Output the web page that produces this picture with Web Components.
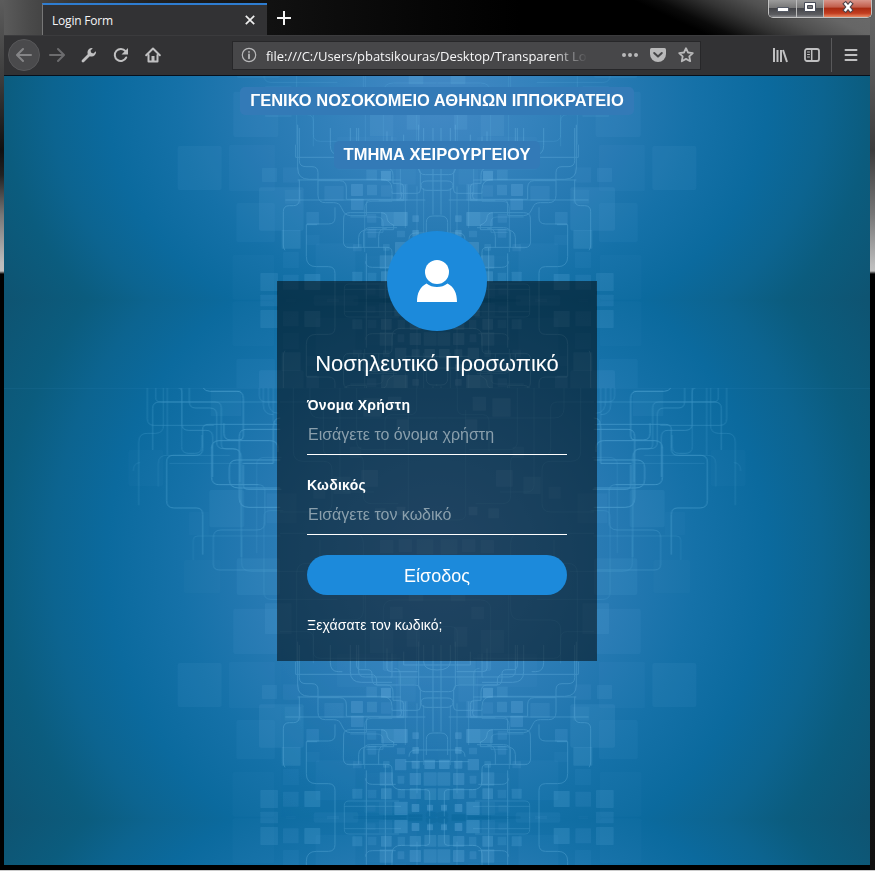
<!DOCTYPE html>
<html lang="el">
<head>
<meta charset="utf-8">
<title>Login Form</title>
<style>
html,body{margin:0;height:100%;overflow:hidden;background:#000}
</style>
</head>
<body>
<browser-window>
  <browser-tab slot="tab">Login Form</browser-tab>
  <browser-toolbar slot="toolbar">file:///C:/Users/pbatsikouras/Desktop/Transparent Lo</browser-toolbar>
  <login-page>
    <page-label slot="heading">ΓΕΝΙΚΟ ΝΟΣΟΚΟΜΕΙΟ ΑΘΗΝΩΝ ΙΠΠΟΚΡΑΤΕΙΟ</page-label>
    <page-label slot="heading">ΤΜΗΜΑ ΧΕΙΡΟΥΡΓΕΙΟΥ</page-label>
    <login-card>
      <span slot="title">Νοσηλευτικό Προσωπικό</span>
      <form-field label="Όνομα Χρήστη">Εισάγετε το όνομα χρήστη</form-field>
      <form-field label="Κωδικός">Εισάγετε τον κωδικό</form-field>
      <span slot="action">Είσοδος</span>
      <span slot="link">Ξεχάσατε τον κωδικό;</span>
    </login-card>
  </login-page>
</browser-window>
<script>
function define(name, html) {
  customElements.define(name, class extends HTMLElement {
    constructor() {
      super();
      this.attachShadow({mode: 'open'}).innerHTML = html;
    }
    connectedCallback() {
      const l = this.shadowRoot.querySelector('[data-label]');
      if (l) l.textContent = this.getAttribute('label');
    }
  });
}

define('browser-window', `
<style>
:host{display:grid;box-sizing:border-box;width:875px;height:871px;grid-template:35px 41px 1fr / 1fr;padding:0 5px 6px 4px;
 background:
  linear-gradient(#ccc,#ccc) 0 870px/100% 1px no-repeat,
  linear-gradient(#5c5c5c,#3c3c3c 80px,#101010 150px,#222 175px,#777 215px,#bbb 262px,#c0c0c0 271px,#444 273px,#000 274px) 0 0/4px 870px no-repeat,
  linear-gradient(#666,#555 80px,#3c3c3c 150px,#777 215px,#bbb 265px,#c0c0c0 271px,#000 274px,#000 480px,#151515 600px,#111) 870px 0/5px 870px no-repeat,
  linear-gradient(25deg,transparent 300px,#0a0a0a 310px,#333 330px,#505050 348px,#666 368px,#6b6b6b) 0 0/875px 36px no-repeat,
  linear-gradient(90deg,#5d5d5d,#4a4a4a 30px,#383838 70px,#222 150px,#111 270px,#060606 420px,#000 520px) 0 0/100% 76px no-repeat,#000;
 position:relative}
.strip{display:flex;padding:3px 0 0 38px;min-width:0}
.plus{width:14px;height:14px;margin:8px 0 0 10px}
.bar{display:flex;flex-direction:column;border-bottom:1px solid #06101c}
main{min-height:0;display:flex}
::slotted(*){flex:1}
.strip ::slotted(*){flex:none}
window-buttons{position:absolute;right:3px;top:0}
</style>
<div class="strip"><slot name="tab"></slot>
<svg class="plus" viewBox="0 0 14 14"><path d="M7 0v14M0 7h14" stroke="#f4f4f4" stroke-width="2"/></svg></div>
<div class="bar"><slot name="toolbar"></slot></div>
<main><slot></slot></main>
<window-buttons></window-buttons>`);

define('window-buttons', `
<style>
:host{display:flex;box-sizing:border-box;width:104px;height:18px;border:1px solid #c2c2c2;border-top:0;border-radius:0 0 5px 5px;overflow:hidden;box-shadow:0 0 1px #111,inset 0 0 0 1px #333}
div{display:flex;align-items:center;justify-content:center;box-sizing:border-box;border-right:1px solid #bbb;background:linear-gradient(#9b9b9b,#777 45%,#444549 50%,#5b5c60 85%,#85868a)}
.a{width:28px}.b{width:27px}.c{flex:1;border:0;background:linear-gradient(#d9958a,#c25d4b 42%,#a92a12 48%,#c23d20 78%,#e98a64)}
svg{width:14px;height:13px;display:block;margin-bottom:4px}
</style>
<div class="a"><svg viewBox="0 0 14 13"><rect x="1.500" y="7.500" width="11" height="4" fill="#fff" stroke="#555a66"/></svg></div>
<div class="b"><svg viewBox="0 0 14 13"><path fill="#fff" fill-rule="evenodd" stroke="#484c58" d="M1.500 2.500h11v9h-11zM4.500 5.500h5v3h-5z"/></svg></div>
<div class="c"><svg viewBox="0 0 14 13"><path d="M4.500 4l5 6M9.500 4l-5 6" stroke="#50434a" stroke-width="4.600" stroke-linecap="square"/><path d="M4.500 4l5 6M9.500 4l-5 6" stroke="#fff" stroke-width="2.400" stroke-linecap="square"/></svg></div>`);

define('browser-tab', `
<style>
:host{display:flex;box-sizing:border-box;width:225px;height:32px;border-top:2px solid #2e7dd1;border-left:1px solid #777;background:#323234;align-items:center;padding:0 12px 0 9px;
 font:12px "Open Sans","Noto Sans",sans-serif;color:#f5f5f7;letter-spacing:-.2px}
span{flex:1}
svg{width:10px;height:10px}
</style><span><slot></slot></span>
<svg viewBox="0 0 10 10"><path d="M.8.8l8.400 8.400M9.200.8L.8 9.200" stroke="#eee" stroke-width="1.700"/></svg>`);

define('browser-toolbar', `
<style>
:host{display:flex;align-items:center;box-sizing:border-box;height:40px;background:#323234;border-top:1px solid #3b3b3d;padding:0 11px 1px 4px;color:#c0c0c1}
svg{width:16px;height:16px;flex:none;fill:none;stroke:currentColor;stroke-width:2;stroke-linecap:round;stroke-linejoin:round}
.back{width:30px;height:30px;border-radius:50%;background:#4a4a4c;border:1px solid #58585a;display:flex;align-items:center;justify-content:center;color:#858587}
.f{color:#6c6c6e;margin-left:9px}
.g{margin-left:16px}
.url{display:flex;align-items:center;box-sizing:border-box;width:469px;height:29px;margin-left:71px;padding:0 6px 0 8px;background:#474749;border:1px solid #272729;font:13px "Open Sans","Noto Sans",sans-serif;color:#f6f6f7}
.t{flex:none;width:322px;margin:2px 0 0 9px;overflow:hidden;white-space:nowrap;-webkit-mask:linear-gradient(90deg,#000 285px,transparent 322px);letter-spacing:-.03px}
.url svg{color:#b9b9ba}
.line{width:1px;height:34px;background:#59595b;margin:0 11px 0 11px}
</style>
<div class="back"><svg viewBox="0 0 16 16"><path d="M15 8H1.500M7 2L1 8l6 6"/></svg></div>
<svg class="f" viewBox="0 0 16 16"><path d="M1 8h13.500M9 2l6 6-6 6"/></svg>
<svg class="g" viewBox="0 0 16 16"><path d="M2 14l6-6" stroke-width="2.800"/><path fill="currentColor" stroke="none" d="M11.800 1.100A4.400 4.400 0 0 0 6.600 6.400L7 8l1 1 1.600.400a4.400 4.400 0 0 0 5.300-5.200L12.300 6.500l-2-.800-.8-2z"/></svg>
<svg class="g" viewBox="0 0 16 16"><path d="M13.200 10.500A6 6 0 1 1 12.500 4.200"/><path fill="currentColor" stroke="none" d="M15 1v6.500H8.500z"/></svg>
<svg class="g" viewBox="0 0 16 16"><path d="M1.200 8.200L8 1.500l6.800 6.700"/><path d="M3.500 8v6.500h9V8" /><path fill="currentColor" stroke="none" d="M6.500 9h3v6h-3z"/></svg>
<div class="url">
<svg viewBox="0 0 16 16" stroke-width="1"><circle cx="8" cy="8" r="6.700" stroke-width="1.200"/><path d="M8 7.500v3.800M8 4.800v.1" stroke-width="1.800"/></svg>
<span class="t"><slot></slot></span>
<svg style="margin-left:34px" viewBox="0 0 16 16"><path d="M2 8h.01M8 8h.01M14 8h.01" stroke-width="4"/></svg>
<svg style="margin-left:12px" viewBox="0 0 16 16"><path fill="currentColor" stroke="none" d="M1.500 1h13Q16 1 16 2.500V7A8 8 0 0 1 0 7V2.500Q0 1 1.500 1z"/><path d="M4.200 6L8 9.600 11.800 6" stroke="#474749"/></svg>
<svg style="margin-left:12px" viewBox="0 0 16 16"><path stroke-width="1.800" d="M8 1.200l2 4.300 4.800.6-3.500 3.300.9 4.800L8 11.900l-4.200 2.300.9-4.800L1.200 6.100 6 5.500z"/></svg>
</div>
<svg style="margin-left:71px" viewBox="0 0 16 16"><path stroke-linecap="butt" d="M2 1v14M5.500 3v12M9 3v12M11 3l4 12"/></svg>
<svg class="g" viewBox="0 0 16 16"><rect x="1" y="2" width="14" height="12" rx="2" stroke-width="1.800"/><path d="M7.700 2v12" stroke-width="1.500"/><path stroke-width="1" d="M3.500 5h2M3.500 7.500h2M3.500 10h2"/></svg>
<div class="line"></div>
<svg viewBox="0 0 16 16"><path d="M2.500 3h11M2.500 8h11M2.500 13h11"/></svg>`);

// Square tiles: [x, y, w, h, opacity]; the right half and the lower strip are reflections.
const squares = [
 [75,90,45,42,.1],[138,88,50,46,.08],[66,148,134,130,.1],[143,155,50,42,.07],[-2,195,116,118,.06],[134,276,57,56,.16],[-178,24,132,132,.08],[-24,20,138,140,.05],
 [-14,350,126,135,.035],[70,405,53,54,.14],[138,410,47,45,.1],[202,408,48,48,.19],[70,470,53,36,.12],[146,482,30,14,.04],[230,472,134,34,.08],[270,482,36,14,.08],
 [138,342,48,48,.06],[208,222,38,38,.15],[262,144,58,44,.12],[208,290,40,32,.05],[236,316,120,120,.055],
 [342,138,36,36,.25],[342,182,38,34,.22],[388,95,32,32,.17],[432,98,30,30,.34],[390,140,30,32,.2],[432,142,30,34,.12],[478,138,34,50,.15],
 [390,228,28,26,.14],[432,222,80,42,.24],[470,222,42,42,.13],[526,232,20,20,.25],[392,272,26,27,.15],[480,278,24,20,.17],[526,276,20,20,.3],
 [348,318,26,22,.12],[438,318,20,20,.16],[474,312,34,34,.25],[524,317,24,24,.27],[562,314,32,28,.3],[428,352,40,40,.2],[482,362,20,24,.18],[518,354,34,36,.25],[560,352,39,40,.2],
 [346,401,30,30,.19],[392,404,26,26,.14],[432,400,32,33,.25],[482,402,22,28,.17],[518,400,34,32,.24],[562,400,36,35,.2],
 [472,440,40,40,.27],[524,447,23,24,.32],[570,449,18,18,.29],[426,440,40,40,.08],[390,450,26,20,.08],
 [440,20,24,28,.1],[484,16,56,72,.11],[476,70,60,70,.06],[300,-4,180,100,.05],[380,355,160,120,.035]
];
const topSquares = [
 [385,240,105,108,.04],[628,360,105,112,.09],[552,570,110,100,.03],[710,565,130,110,.09],[700,716,135,136,.08],[795,700,80,92,.1],[632,60,92,78,.07],[567,425,60,70,.04],[800,370,90,90,.08],
 [940,350,36,36,.12],[1000,320,52,52,.16],[1084,300,50,50,.18],[1090,85,55,55,.2],[1164,80,40,42,.2],[1190,148,36,40,.2],[1050,230,34,34,.1],[1125,415,32,30,.2],[1190,410,26,26,.25],[1140,510,40,40,.17],[1196,508,40,38,.18],[1250,508,50,45,.16],[1146,575,44,42,.16],[1200,570,34,38,.2],[1160,640,30,30,.16],[1226,650,44,44,.16],[1170,710,38,38,.15],[1110,780,70,70,.12],[1220,770,40,60,.14]
];
const r = a => a.map(([x,y,w,h,o]) => `<rect x="${x}" y="${y}" width="${w}" height="${h}" rx="${w > 100 ? 6 : 2}" opacity="${o}"/>`).join('');

// Glow ellipses: [id, centre y, vertical scale, band top, band height].
const bands = [['g1',100,.77,76,225],['g2',559.500,1,301,517],['g3',1019,.77,818,47]];
const stops = '<stop offset="0" stop-color="#4489c5"/><stop offset=".18" stop-color="#3482bc"/><stop offset=".33" stop-color="#2679b2"/><stop offset=".47" stop-color="#1571a8"/><stop offset=".6" stop-color="#0b6a9e"/><stop offset=".7" stop-color="#0c6490"/><stop offset=".79" stop-color="#0b5c7e"/><stop offset=".91" stop-color="#0e5472"/><stop offset="1" stop-color="#0e5070"/>';

define('circuit-backdrop', `
<style>:host{display:block}svg{display:block;width:100%;height:100%}</style>
<svg viewBox="4 76 866 789" preserveAspectRatio="none">
<defs>
 ${bands.map(([id, cy, s]) => `<radialGradient id="${id}" cx="0" cy="0" r="550" gradientUnits="userSpaceOnUse" gradientTransform="translate(437 ${cy}) scale(1 ${s})">${stops}</radialGradient>`).join('')}
 <clipPath id="low"><rect x="0" y="388" width="437.200" height="429.500"/></clipPath>
 <clipPath id="tileclip"><rect x="0" y="388" width="875" height="517"/></clipPath>
 <g id="half"><g clip-path="url(#low)">
  <g transform="translate(237 655) scale(.33333)">
   <g fill="#72b8e8">${r(squares)}</g>
   <g fill="none" stroke="#82caf1" stroke-width="3" opacity=".27">
    <path d="M182-40V90q0 34 35 34h216q32 0 32 30v12h75q10 0 10-10V106q0-16-17-16H420q-15 0-15-20V56q0-12-14-12h-20q-12 0-12-14V-30"/>
    <path d="M187-30V68q0 18 20 18h18q18 0 18 18v68q0 22 22 22h25q18 0 23 15l8 15q8 9 20 9h47v-35q0-13 15-13h80q10 0 10-10v-12"/>
    <path d="M176 20v38h225q18 0 18 20v12h31q18 0 18 22v24h20q12 0 12 12v40h-75"/>
    <path d="M280-30V22q0 28 24 28h12M243 128h65q20 0 20 22v34h170M187 125v60q0 18-18 18h-12q-18 0-18 18v100q0 10 5 16"/>
    <path d="M320 240q0-16 20-16h90q20 0 20 15t20 22v14h-75q-30 0-30 24v30h-28q-18 0-18-20zM380 330v-45q0-16 20-16h80M425 330v-35q0-25 25-25"/>
    <path d="M182 126h310M145 186h420M240 260H208v96q0 30 30 30h36q20 0 20 20v184M294 208v32q0 18-20 18h-64"/>
    <path d="M330 328h120q15 0 15 15v35q0 26 28 26h75q10 0 10 10v70M388 346v250M386 370q0 18 20 18h70M445 330v240M516 305q0-20 20-20h68M505 320h100"/>
    <path d="M600 538H336q-14 0-14-14V452q0-14 14-14h150M322 454h170M322 522h170" opacity=".7"/>
    <path d="M552 142q0-13 18-13h34M552 142q0 15 18 15h34M568 300v-46q0-20 20-20h16M588-30v260M545-40v130q0 20 20 20h40M560-30V20q0 25 40 25"/>
    <path d="M365-30V50q0 16 20 16h80V-5M340-30v80q0 32 33 32h92M450-20v60q0 10 12 10h80M500-10v40h105M460 66h145"/>
    <path d="M340 237h80q18 0 18 16v30h-50M465 160v30h-60q-22 0-22 22v130M490 170V60q0-20-18-20M505 140v130M540 145v270M560 150v180" opacity=".7"/>
   </g>
   <g fill="#025f93" opacity=".3"><rect x="438" y="482" width="70" height="6"/><rect x="514" y="478" width="42" height="10"/><rect x="566" y="471" width="34" height="17" rx="8" opacity=".6"/><rect x="350" y="483" width="140" height="5" opacity=".6"/></g>
  </g>
  <g transform="translate(0 370) scale(.33333)">
   <g fill="#72b8e8">${r(topSquares)}</g>
   <g fill="none" stroke="#6fc0ea" stroke-width="3" opacity=".42">
    <path d="M467 54v28q0 14 15 14h345M442 54v92q0 20 20 20h180" opacity=".6"/>
    <path d="M490 54v112q0 24-24 24h-24q-26 0-26 26v190" opacity=".5"/>
    <path d="M536 54q10 0 10 15v94q0 18 20 18h52q20 0 20 20v120" opacity=".7"/>
    <path d="M610 54q5 10 20 10h82q18 0 18 22v112q0 12-12 12h-26q-20 0-20-20V160"/>
    <path d="M458 240V116q0-20 20-20h168q18 0 18 18v108q0 15 15 15h20q25 0 25 25v300M568 54v40q0 20 18 20h44q20 0 20 20v82q0 20 20 20h30q20 0 20 20v80" opacity=".7"/>
    <path d="M830 163H625q-17 0-17 16v57q0 20-20 20h-68q-20 0-20 20v116q0 22 22 22h68q18 0 18 20v120" opacity=".85"/>
    <path d="M635 235q0-23 23-23h152q24 0 24 24v10M635 230v92q0 22 22 22h118"/>
    <path d="M775 344q20 0 20 20v90q0 26-24 26H662q-22 0-22 24v78q0 18 18 18h176" opacity=".6"/>
    <path d="M840 178H738q-20 0-20 22v184q0 28 28 28h94M840 270H710q-22 0-22 24v34q0 26 28 26h124M728 280h92v-106q0-30 20-30M730 284v60q0 14 14 14h100"/>
    <path d="M778 54v22q0 20 20 20h36M790 54v50q0 30 30 30M805 54v36q0 40 30 40M820 54v98q0 12 18 12M502 54v200M545 54v176q0 20 20 20h20q20 0 20-20v-35" opacity=".55"/>
    <path d="M420 278q-20 0-20 25M475 350V280q0-24 25-24h190M508 280h210M580 570v-60q0-12 12-12h250M770 550V285q0-23 25-23h50M792 600V440q0-18 18-18h40M792 600v66q0 22 20 22h200M725 500v78q0 26 28 26h160" opacity=".4"/>
   </g>
   <g fill="none" stroke="#67b9e5" stroke-width="3" opacity=".2">
    <path d="M840 96h110q20 0 20 20v120q0 20 20 20h80q20 0 20 20v100q0 25 25 25h80M880 54v190q0 30 30 30h60q26 0 26 26v100q0 26-26 26H840M1070 54v160q0 25 25 25h120M930 54v60q0 30 30 30h350M1250 54v60q0 20-20 20h-55q-20 0-20 20v90M1020 54v290q0 22 22 22h80M840 490h220q30 0 30 30v200q0 30-30 30h-90q-30 0-30 30v100M960 510v130q0 20 20 20h330M1225 120v310q0 20 20 20h70M890 875V610q0-30 30-30h150q26 0 26 26v290M1150 900V720q0-30 30-30h130M840 785h80q20 0 20 20v40q0 20 22 20h240M1250 900V790q0-20 20-20h40"/>
   </g>
  </g>
 </g></g>
 <g id="sym"><use href="#half"/><use href="#half" transform="translate(874 0) scale(-1 1)"/></g>
 <g id="tile" clip-path="url(#tileclip)"><use href="#sym"/><use href="#sym" transform="translate(0 1635) scale(1 -1)"/></g>
</defs>
${bands.map(([id,,, y, h]) => `<rect x="0" y="${y}" width="875" height="${h}" fill="url(#${id})"/>`).join('')}
<use href="#tile"/><use href="#tile" transform="translate(0 -517)"/>
<path d="M4 388.500h866" stroke="#4b9bcb" opacity=".09"/>
</svg>`);

define('login-page', `
<style>
:host{display:grid;font-family:"Liberation Sans",Arial,sans-serif;color:#fff;min-height:0;overflow:hidden}
circuit-backdrop,.c{grid-area:1/1;min-height:0}
.c{display:flex;flex-direction:column;align-items:center;z-index:1;padding-top:11px;gap:26px}
::slotted(login-card){margin-top:86px}
</style>
<circuit-backdrop></circuit-backdrop>
<div class="c"><slot name="heading"></slot><slot></slot></div>`);

define('page-label', `
<style>:host{display:flex;align-items:center;justify-content:center;box-sizing:border-box;height:28px;padding:0 10px 2px;border-radius:5px;background:#337ab7;font-size:16.500px;font-weight:700;line-height:26px;white-space:nowrap}</style><slot></slot>`);

define('login-card', `
<style>
:host{display:flex;flex-direction:column;box-sizing:border-box;width:320px;height:380px;padding:0 30px;background:rgba(0,0,0,.5)}
.avatar{width:100px;height:100px;margin:-50px auto 0;flex:none}
h2{margin:19px 0 12px;height:28px;font-size:22px;font-weight:400;line-height:28px;text-align:center;white-space:nowrap}
button{display:block;width:100%;height:40px;flex:none;margin:5px 0 0;border:0;border-radius:20px;background:#1c8adb;color:#fff;font:18px "Liberation Sans",Arial,sans-serif;padding:2px 0 0}
a{font-size:14px;line-height:20px;margin-top:20px;letter-spacing:.08px}
</style>
<svg class="avatar" viewBox="0 0 100 100"><circle cx="50" cy="50" r="50" fill="#1c8adb"/><circle cx="50" cy="41" r="12" fill="#fff"/><path fill="#fff" d="M39.500 52.500c6 4.700 15 4.700 21 0C67 56 70 62 70 71H30c0-9 3-15 9.500-18.500z"/></svg>
<h2><slot name="title"></slot></h2>
<slot></slot>
<button><slot name="action"></slot></button>
<a><slot name="link"></slot></a>`);

define('form-field', `
<style>
:host{display:flex;flex-direction:column;height:80px;flex:none}
label{font-size:14px;font-weight:700;line-height:20px;margin-top:5px;height:20px;letter-spacing:.28px}
div{box-sizing:border-box;height:40px;border-bottom:1px solid #fff;padding:0 1px;font-size:16px;line-height:39px;color:#8a9fac}
</style><label data-label></label><div><slot></slot></div>`);
</script>
</body>
</html>
